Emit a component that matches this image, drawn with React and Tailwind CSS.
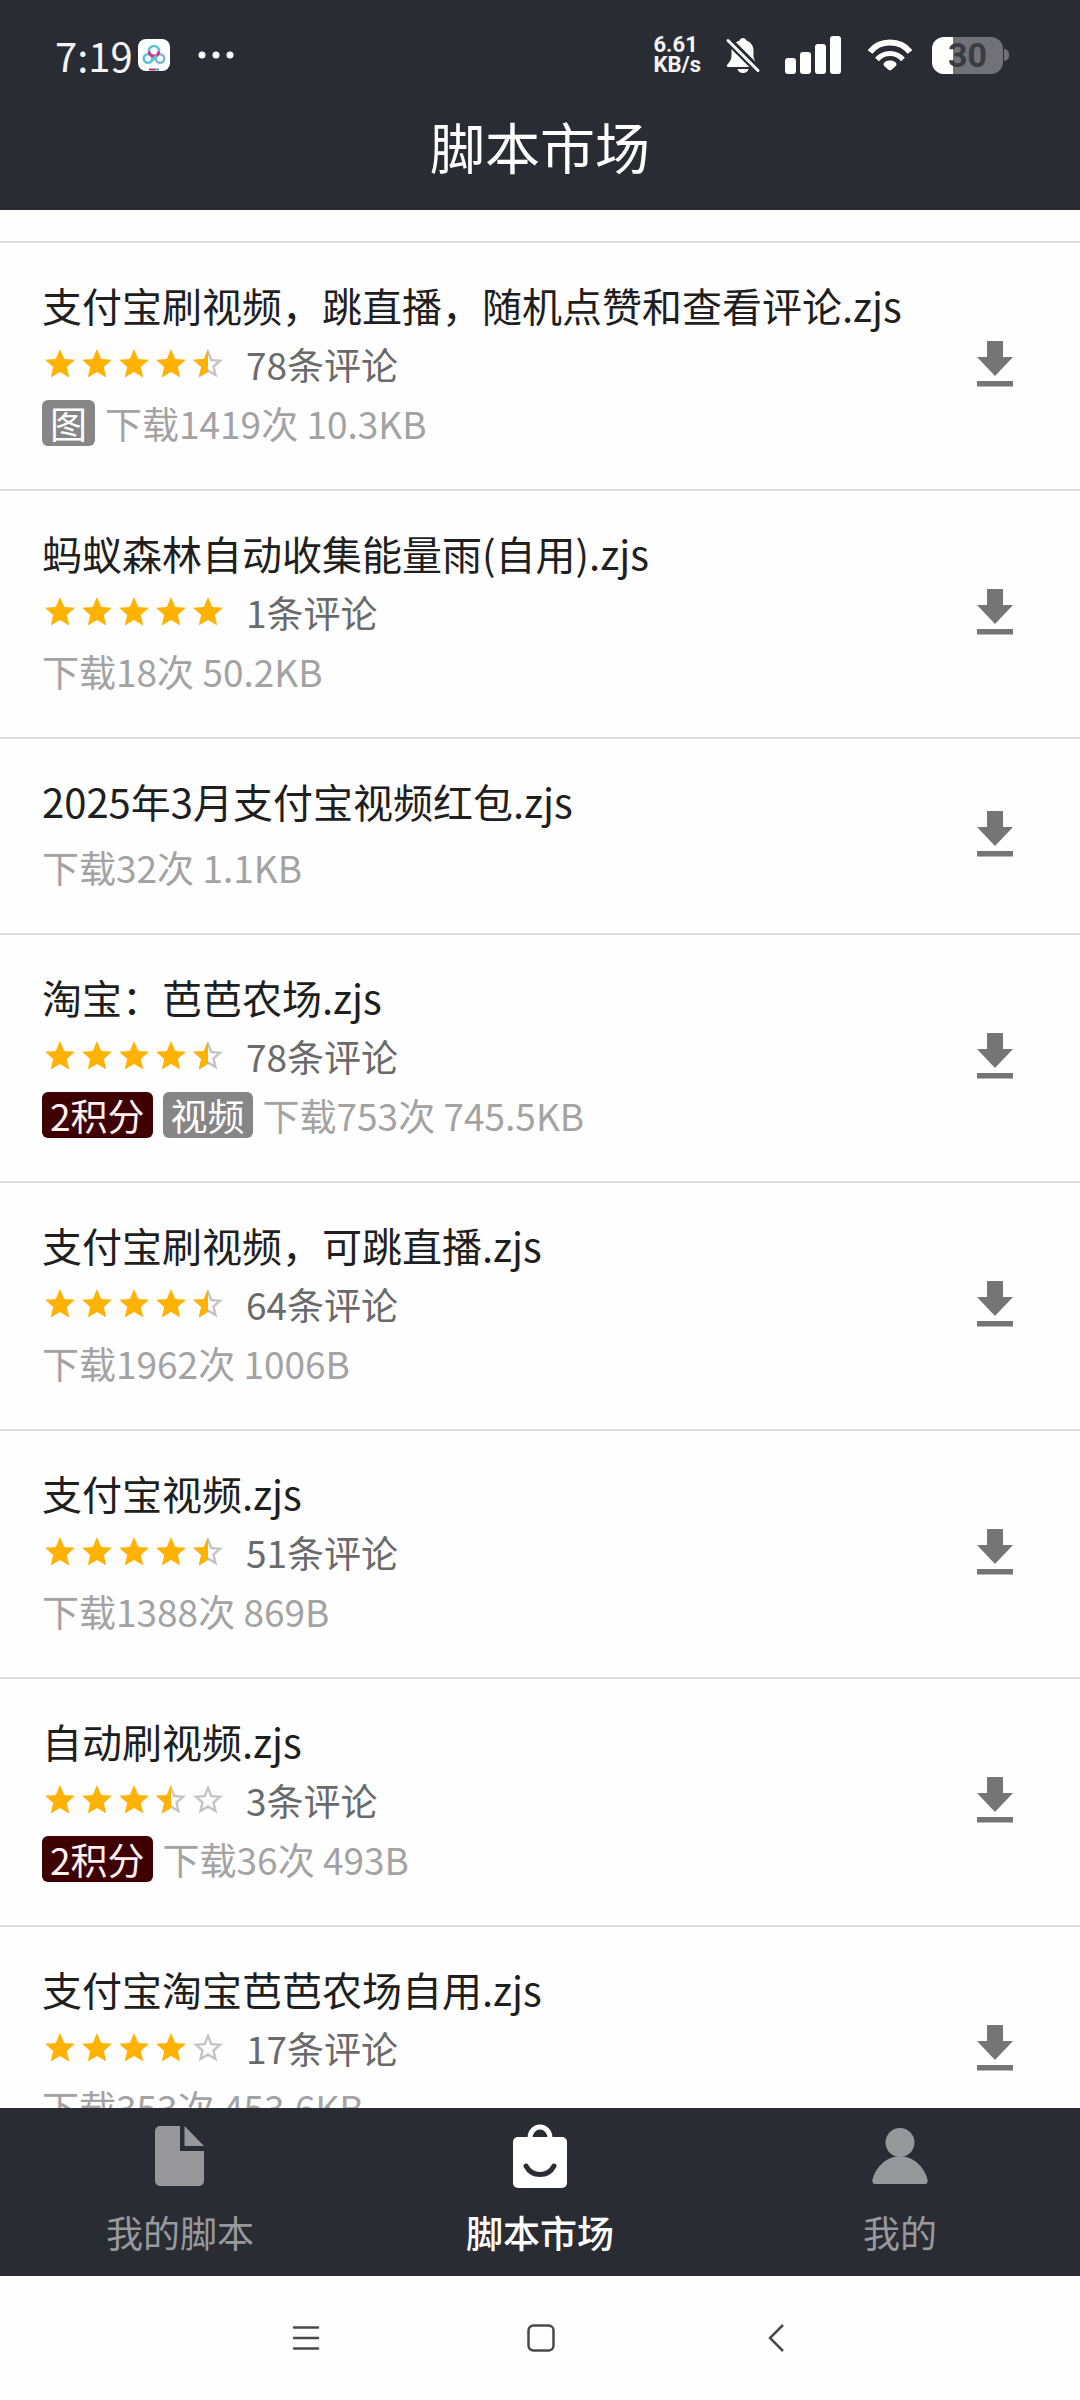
const scripts = [
  { title: "支付宝刷视频，跳直播，随机点赞和查看评论.zjs", rating: 4.5, reviews: 78, tags: ["图"], downloads: 1419, size: "10.3KB" },
  { title: "蚂蚁森林自动收集能量雨(自用).zjs", rating: 5, reviews: 1, downloads: 18, size: "50.2KB" },
  { title: "2025年3月支付宝视频红包.zjs", downloads: 32, size: "1.1KB" },
  { title: "淘宝：芭芭农场.zjs", rating: 4.5, reviews: 78, points: 2, tags: ["视频"], downloads: 753, size: "745.5KB" },
  { title: "支付宝刷视频，可跳直播.zjs", rating: 4.5, reviews: 64, downloads: 1962, size: "1006B" },
  { title: "支付宝视频.zjs", rating: 4.5, reviews: 51, downloads: 1388, size: "869B" },
  { title: "自动刷视频.zjs", rating: 3.5, reviews: 3, points: 2, downloads: 36, size: "493B" },
  { title: "支付宝淘宝芭芭农场自用.zjs", rating: 4, reviews: 17, downloads: 353, size: "453.6KB" },
];

const STAR = "M12 17.27 18.18 21l-1.64-7.03L22 9.24l-7.19-.61L12 2 9.19 8.63 2 9.24l5.46 4.73L5.82 21z";
const STAR_OUTLINE =
  "M22 9.24l-7.19-.62L12 2 9.19 8.63 2 9.24l5.46 4.73L5.82 21 12 17.27 18.18 21l-1.63-7.03L22 9.24zM12 15.4l-3.76 2.27 1-4.28-3.32-2.88 4.38-.38L12 6.1l1.71 4.04 4.38.38-3.32 2.88 1 4.28L12 15.4z";
const STAR_LEFT = "M12 17.27V2L9.19 8.63 2 9.24l5.46 4.73L5.82 21z";

function Star({ fill }) {
  return (
    <svg viewBox="0 0 24 24" className="size-9" aria-hidden="true">
      {fill < 1 && <path d={STAR_OUTLINE} fill="#c4c4c4" />}
      {fill === 1 && <path d={STAR} fill="#ffb300" />}
      {fill === 0.5 && <path d={STAR_LEFT} fill="#ffb300" />}
    </svg>
  );
}

function Rating({ value }) {
  return (
    <span className="flex gap-px" role="img" aria-label={`${value} / 5`}>
      {[0, 1, 2, 3, 4].map((i) => (
        <Star key={i} fill={Math.max(0, Math.min(1, value - i))} />
      ))}
    </span>
  );
}

function DownloadIcon() {
  return (
    <svg viewBox="0 0 38 46" className="h-[46px] w-[38px]" fill="#757575" aria-hidden="true">
      <path d="M11 0h16v16h10L19 35 1 16h10z" />
      <path d="M1 40h36v5.500H1z" />
    </svg>
  );
}

function ScriptRow({ item }) {
  const rated = item.rating !== undefined;
  return (
    <li className="flex items-center border-t-2 border-[#dedede] pr-[50px] pl-[42px]">
      <div className="min-w-0 flex-1 pt-8 pb-9">
        <h2 className="truncate text-[40px] leading-[60px] text-[#1f1f1f]">{item.title}</h2>
        {rated && (
          <div className="flex h-[58px] items-center gap-5">
            <Rating value={item.rating} />
            <span className="text-[37px] leading-[58px] text-[#6a6a6a]">{item.reviews}条评论</span>
          </div>
        )}
        <div className={rated ? "flex h-[60px] items-center gap-2.5" : "mt-1.5 flex h-[60px] items-center gap-2.5"}>
          {item.points && (
            <span className="rounded-md bg-[#3f0003] px-2 text-[37px] leading-[46px] text-[#fff4f2]">{item.points}积分</span>
          )}
          {item.tags?.map((tag) => (
            <span key={tag} className="rounded-md bg-[#868686] px-2 text-[37px] leading-[46px] text-white">
              {tag}
            </span>
          ))}
          <span className="text-[37px] leading-[58px] text-[#a3a3a3]">
            下载{item.downloads}次 {item.size}
          </span>
        </div>
      </div>
      <button type="button" aria-label={`下载 ${item.title}`} className="flex h-24 w-[70px] items-center justify-center pb-1">
        <DownloadIcon />
      </button>
    </li>
  );
}

function CloudAppIcon() {
  return (
    <svg viewBox="0 0 32 32" className="size-8" fill="none" aria-hidden="true">
      <rect width="32" height="32" rx="8" fill="#fff" />
      <circle cx="16" cy="12" r="5" stroke="#5cc3d8" strokeWidth="2.6" />
      <circle cx="10" cy="19.5" r="4.2" stroke="#5cc3d8" strokeWidth="2.6" />
      <circle cx="22" cy="19.5" r="4.2" stroke="#7db9cf" strokeWidth="2.6" />
      <path d="M11 12.5c.4 3 2.400 4.600 5 4.600s4.600-1.600 5-4.600" stroke="#dd2f7f" strokeWidth="2.800" />
      <path d="M13.500 22 19 16.500" stroke="#5cc3d8" strokeWidth="2.600" />
      <path d="M11 30.500h6" stroke="#b8305f" strokeWidth="2" />
      <path d="M17 30.500h4" stroke="#3f9da8" strokeWidth="2" />
    </svg>
  );
}

function BellOffIcon() {
  return (
    <svg viewBox="0 0 36 36" className="size-9" aria-hidden="true">
      <path
        d="M18 1c1.700 0 3 1 3.400 2.400C26 5 28.500 9 28.500 13.500V20l2 5.500c1 1.500 2.500 3 2.500 4.500H3c-1 0-1.600-1.200-.8-2.200C4.500 25 6.500 23 6.500 19v-5.500C6.500 9 10 5 14.600 3.400 15 2 16.300 1 18 1z"
        fill="#fff"
      />
      <path d="M12.500 32h11c-.5 2.500-2.800 4-5.500 4s-5-1.500-5.500-4z" fill="#fff" />
      <path d="M0 0 36 36" stroke="#2a2c34" strokeWidth="8" />
      <path d="M3 3.500 33 33.500" stroke="#fff" strokeWidth="3" strokeLinecap="round" />
    </svg>
  );
}

function SignalIcon() {
  return (
    <svg viewBox="0 0 57 38" className="h-[38px] w-[57px]" fill="#fff" aria-hidden="true">
      <rect x="0" y="22" width="11" height="16" rx="3" />
      <rect x="15" y="16" width="11" height="22" rx="3" />
      <rect x="30" y="8" width="11" height="30" rx="3" />
      <rect x="45" y="0" width="11" height="38" rx="3" />
    </svg>
  );
}

function WifiIcon() {
  return (
    <svg viewBox="0 0 44 32" className="h-8 w-11" fill="none" stroke="#fff" aria-hidden="true">
      <path d="M2 13C7 6.500 14 3.500 22 3.500S37 6.500 42 13" strokeWidth="6" />
      <path d="M9 20.500c3.500-4 8-6 13-6s9.500 2 13 6" strokeWidth="5" />
      <path d="M22 31.500c-1 0-6.500-4.500-6.500-6 0-2.500 3.500-4 6.500-4s6.500 1.500 6.500 4c0 1.500-5.500 6-6.500 6z" fill="#fff" stroke="none" />
    </svg>
  );
}

function Battery({ level }) {
  return (
    <div className="flex items-center gap-px">
      <div className="relative flex h-[37px] w-[71px] items-center justify-center rounded-xl bg-[#717278]">
        <div className="absolute inset-y-0 left-0 rounded-l-xl bg-white" style={{ width: `${level}%` }} />
        <span className="relative font-['Roboto'] text-[34px] leading-[37px] font-bold text-[#3a3c43]">{level}</span>
      </div>
      <div className="h-3 w-[5px] rounded-r-full bg-[#717278]" />
    </div>
  );
}

function StatusBar() {
  return (
    <div className="flex h-[110px] items-center justify-between pr-[71px] pl-[55px] text-[#f4f4f6]">
      <div className="flex items-center">
        <time className="w-[83px] text-[40px] leading-[44px]">7:19</time>
        <CloudAppIcon />
        <svg viewBox="0 0 36 8" className="ml-7 h-2 w-9" fill="#fff" aria-hidden="true">
          <circle cx="4" cy="4" r="3.500" />
          <circle cx="18" cy="4" r="3.500" />
          <circle cx="32" cy="4" r="3.500" />
        </svg>
      </div>
      <div className="flex items-center">
        <div className="mr-6 font-['Roboto'] text-[22px] leading-5 font-bold">
          <div>6.61</div>
          <div>KB/s</div>
        </div>
        <BellOffIcon />
        <div className="ml-6 flex items-center gap-[26px]">
          <SignalIcon />
          <WifiIcon />
        </div>
        <div className="ml-5">
          <Battery level={30} />
        </div>
      </div>
    </div>
  );
}

function FileIcon() {
  return (
    <svg viewBox="0 0 50 60" className="h-[60px] w-[50px]" fill="#98979c" aria-hidden="true">
      <path d="M5 0h20v25h24v30a5 5 0 0 1-5 5H5a5 5 0 0 1-5-5V5a5 5 0 0 1 5-5z" />
      <path d="M29.500 0 49 20H29.500z" />
    </svg>
  );
}

function BagIcon() {
  return (
    <svg viewBox="0 0 54 64" className="h-16 w-[54px]" fill="none" aria-hidden="true">
      <rect y="13" width="54" height="51" rx="5" fill="#fff" />
      <path d="M17 16v-2a10 11 0 0 1 20 0v2" stroke="#fff" strokeWidth="5" />
      <path d="M13 42c3 5.500 8.500 8.500 14 8.500S38 47.500 41 42" stroke="#2a2c34" strokeWidth="5" strokeLinecap="round" />
    </svg>
  );
}

function PersonIcon() {
  return (
    <svg viewBox="0 0 56 58" className="h-[58px] w-14" fill="#97989b" aria-hidden="true">
      <circle cx="28" cy="15.500" r="14.500" />
      <path d="M20 30.500c2.500-.8 4-1 8-1s5.500.2 8 1C46 34 53 43 55.500 52.500c.5 3-.5 4.500-2.500 4.500H3c-2 0-3-1.500-2.500-4.500C3 43 10 34 20 30.500z" />
    </svg>
  );
}

function Tab({ label, icon, active }) {
  return (
    <button
      type="button"
      aria-current={active ? "page" : undefined}
      className={
        active
          ? "flex flex-col items-center gap-[18px] pt-4 pb-[18px] font-medium text-white"
          : "flex flex-col items-center gap-[18px] pt-4 pb-[18px] text-[#98999d]"
      }
    >
      <span className="flex h-16 items-center">{icon}</span>
      <span className="text-[37px] leading-[52px]">{label}</span>
    </button>
  );
}

function SystemButton({ label, children }) {
  return (
    <button type="button" aria-label={label} className="flex size-12 items-center justify-center">
      <svg viewBox="0 0 28 28" className="size-7" fill="none" stroke="#4a4a4a" strokeWidth="2.500" aria-hidden="true">
        {children}
      </svg>
    </button>
  );
}

export default function App() {
  return (
    <div className="flex h-screen flex-col bg-[#fefefe] font-['Noto_Sans_CJK_SC',sans-serif]" lang="zh-CN">
      <header className="shrink-0 bg-[#2a2c34] pb-[30px]">
        <StatusBar />
        <h1 className="text-center text-[55px] leading-[70px] text-white">脚本市场</h1>
      </header>

      <main className="min-h-0 flex-1 overflow-hidden pt-[31px]">
        <ul>
          {scripts.map((item) => (
            <ScriptRow key={item.title} item={item} />
          ))}
        </ul>
      </main>

      <nav className="grid shrink-0 grid-cols-3 bg-[#2a2c34]">
        <Tab label="我的脚本" icon={<FileIcon />} />
        <Tab label="脚本市场" icon={<BagIcon />} active />
        <Tab label="我的" icon={<PersonIcon />} />
      </nav>

      <div className="flex h-[124px] shrink-0 items-center justify-center gap-[187px] bg-[#fefefe] pl-0.5">
        <SystemButton label="最近任务">
          <path d="M2 3.500h24M2 14h24M2 24.500h24" strokeLinecap="round" />
        </SystemButton>
        <SystemButton label="主屏幕">
          <rect x="1.500" y="1.500" width="25" height="25" rx="5" />
        </SystemButton>
        <SystemButton label="返回">
          <path d="M21 1 8 14l13 13" />
        </SystemButton>
      </div>
    </div>
  );
}
